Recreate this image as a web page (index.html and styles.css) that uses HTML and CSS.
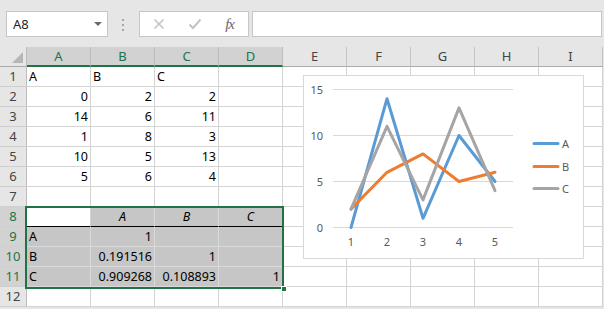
FILE: index.html
```html
<!DOCTYPE html>
<html lang="en">
<head>
    <meta charset="UTF-8">
    <title>Correlation</title>
    <link rel="stylesheet" href="styles.css">
</head>
<body>
    <div class="toolbar">
        <div class="namebox">
            <span>A8</span>
            <span class="caret"></span>
        </div>
        <div class="grip"><i></i><i></i><i></i></div>
        <div class="fxbtns">
            <svg width="12" height="12" viewBox="0 0 12 12"><path d="M1.5 1.5 L10.5 10.5 M10.5 1.5 L1.5 10.5" stroke="#c3c3c3" stroke-width="1.5" fill="none"/></svg>
            <svg width="14" height="12" viewBox="0 0 14 12"><path d="M1.5 6.5 L5 10 L12.5 1.5" stroke="#c3c3c3" stroke-width="2" fill="none"/></svg>
            <span class="fx">fx</span>
        </div>
        <div class="formula"></div>
    </div>

    <div class="sheet">
        <div class="grid">
            <div class="corner"></div>
            <div class="ch sel">A</div><div class="ch sel">B</div><div class="ch sel">C</div><div class="ch sel">D</div>
            <div class="ch">E</div><div class="ch">F</div><div class="ch">G</div><div class="ch">H</div><div class="ch">I</div>

            <div class="rh">1</div>
            <div class="c">A</div><div class="c">B</div><div class="c">C</div><div class="c"></div>
            <div class="c"></div><div class="c"></div><div class="c"></div><div class="c"></div><div class="c"></div>

            <div class="rh">2</div>
            <div class="c n">0</div><div class="c n">2</div><div class="c n">2</div><div class="c"></div>
            <div class="c"></div><div class="c"></div><div class="c"></div><div class="c"></div><div class="c"></div>

            <div class="rh">3</div>
            <div class="c n">14</div><div class="c n">6</div><div class="c n">11</div><div class="c"></div>
            <div class="c"></div><div class="c"></div><div class="c"></div><div class="c"></div><div class="c"></div>

            <div class="rh">4</div>
            <div class="c n">1</div><div class="c n">8</div><div class="c n">3</div><div class="c"></div>
            <div class="c"></div><div class="c"></div><div class="c"></div><div class="c"></div><div class="c"></div>

            <div class="rh">5</div>
            <div class="c n">10</div><div class="c n">5</div><div class="c n">13</div><div class="c"></div>
            <div class="c"></div><div class="c"></div><div class="c"></div><div class="c"></div><div class="c"></div>

            <div class="rh">6</div>
            <div class="c n">5</div><div class="c n">6</div><div class="c n">4</div><div class="c"></div>
            <div class="c"></div><div class="c"></div><div class="c"></div><div class="c"></div><div class="c"></div>

            <div class="rh">7</div>
            <div class="c"></div><div class="c"></div><div class="c"></div><div class="c"></div>
            <div class="c"></div><div class="c"></div><div class="c"></div><div class="c"></div><div class="c"></div>

            <!-- output table of the correlation tool -->
            <div class="rh on">8</div>
            <div class="c head"></div><div class="c g head i">A</div><div class="c g head i">B</div><div class="c g head i">C</div>
            <div class="c"></div><div class="c"></div><div class="c"></div><div class="c"></div><div class="c"></div>

            <div class="rh on">9</div>
            <div class="c g">A</div><div class="c g n">1</div><div class="c g"></div><div class="c g"></div>
            <div class="c"></div><div class="c"></div><div class="c"></div><div class="c"></div><div class="c"></div>

            <div class="rh on">10</div>
            <div class="c g">B</div><div class="c g n">0.191516</div><div class="c g n">1</div><div class="c g"></div>
            <div class="c"></div><div class="c"></div><div class="c"></div><div class="c"></div><div class="c"></div>

            <div class="rh on">11</div>
            <div class="c g">C</div><div class="c g n">0.909268</div><div class="c g n">0.108893</div><div class="c g n">1</div>
            <div class="c"></div><div class="c"></div><div class="c"></div><div class="c"></div><div class="c"></div>

            <div class="rh">12</div>
            <div class="c"></div><div class="c"></div><div class="c"></div><div class="c"></div>
            <div class="c"></div><div class="c"></div><div class="c"></div><div class="c"></div><div class="c"></div>
        </div>

        <div class="selection"><span class="handle"></span></div>

        <div class="chart">
            <svg width="279" height="182" viewBox="0 0 279 182">
                <g stroke="#d9d9d9" stroke-width="1">
                    <line x1="29" y1="13.5" x2="209" y2="13.5"/>
                    <line x1="29" y1="59.5" x2="209" y2="59.5"/>
                    <line x1="29" y1="105.5" x2="209" y2="105.5"/>
                    <line x1="29" y1="151.5" x2="209" y2="151.5"/>
                </g>
                <g class="lbl" text-anchor="end">
                    <text x="19" y="17.5">15</text>
                    <text x="19" y="63.5">10</text>
                    <text x="19" y="109.5">5</text>
                    <text x="19" y="155.5">0</text>
                </g>
                <g class="lbl" text-anchor="middle">
                    <text x="47" y="169.5">1</text>
                    <text x="83" y="169.5">2</text>
                    <text x="119" y="169.5">3</text>
                    <text x="155" y="169.5">4</text>
                    <text x="191" y="169.5">5</text>
                </g>
                <g fill="none" stroke-width="3" stroke-linejoin="round" stroke-linecap="round">
                    <polyline stroke="#5b9bd5" points="47,151.5 83,22.7 119,142.3 155,59.5 191,105.5"/>
                    <polyline stroke="#ed7d31" points="47,133.1 83,96.3 119,77.9 155,105.5 191,96.3"/>
                    <polyline stroke="#a5a5a5" points="47,133.1 83,50.3 119,123.9 155,31.9 191,114.7"/>
                    <line stroke="#5b9bd5" x1="230" y1="67.5" x2="254" y2="67.5"/>
                    <line stroke="#ed7d31" x1="230" y1="90.5" x2="254" y2="90.5"/>
                    <line stroke="#a5a5a5" x1="230" y1="112.5" x2="254" y2="112.5"/>
                </g>
                <g class="lbl">
                    <text x="258" y="71.5">A</text>
                    <text x="258" y="94.5">B</text>
                    <text x="258" y="116.5">C</text>
                </g>
            </svg>
        </div>
    </div>
</body>
</html>
```

FILE: styles.css
```css
* {
    margin: 0;
    padding: 0;
    box-sizing: border-box;
}
html, body {
    width: 604px;
    height: 309px;
    overflow: hidden;
    background: #e6e6e6;
    font-family: "Noto Sans", "Open Sans", sans-serif;
    font-size: 13px;
    color: #000;
}
.toolbar {
    height: 47px;
    display: flex;
    align-items: flex-start;
    padding: 11px 2px 0 6px;
}
.namebox {
    width: 102px;
    height: 26px;
    background: #fff;
    border: 1px solid #c6c6c6;
    display: flex;
    align-items: center;
    justify-content: space-between;
    padding: 0 5px 0 6px;
    color: #222;
}
.caret {
    width: 0;
    height: 0;
    border-left: 4px solid transparent;
    border-right: 4px solid transparent;
    border-top: 4px solid #6a6a6a;
    margin-top: -1px;
}
.grip {
    display: flex;
    flex-direction: column;
    gap: 3px;
    margin: 8px 15px 0 14px;
}
.grip i {
    width: 2px;
    height: 2px;
    background: #a6a6a6;
}
.fxbtns {
    width: 110px;
    height: 26px;
    background: #fff;
    border: 1px solid #c6c6c6;
    display: flex;
    align-items: center;
    justify-content: space-between;
    padding: 0 14px 0 13px;
    margin-right: 3px;
}
.fx {
    font-family: "Liberation Serif", serif;
    font-style: italic;
    font-size: 15px;
    color: #666;
    letter-spacing: -1px;
}
.formula {
    flex: 1;
    height: 26px;
    background: #fff;
    border: 1px solid #c6c6c6;
}
.sheet {
    position: relative;
}
.grid {
    display: grid;
    grid-template-columns: 27px repeat(9, 64px);
    grid-auto-rows: 20px;
    background: #fff;
    width: 603px;
    border-right: 1px solid #bdbdbd;
}
.grid > div {
    line-height: 19px;
    white-space: nowrap;
    overflow: hidden;
}
.corner {
    background: #e6e6e6;
    border-right: 1px solid #bdbdbd;
    border-bottom: 1px solid #ababab;
    position: relative;
}
.corner::after {
    content: "";
    position: absolute;
    right: 3px;
    bottom: 3px;
    border-left: 11px solid transparent;
    border-bottom: 11px solid #b7b7b7;
}
.ch {
    background: #e6e6e6;
    border-right: 1px solid #c4c4c4;
    border-bottom: 1px solid #ababab;
    text-align: center;
    color: #444;
}
.ch.sel {
    background: #d2d2d2;
    color: #217346;
    border-bottom: 2px solid #217346;
    border-right-color: #bdbdbd;
}
.rh {
    background: #e6e6e6;
    border-right: 1px solid #bdbdbd;
    border-bottom: 1px solid #cfcfcf;
    text-align: center;
    color: #444;
}
.rh.on {
    background: #d2d2d2;
    color: #217346;
}
.c {
    border-right: 1px solid #d4d4d4;
    border-bottom: 1px solid #d4d4d4;
    padding: 0 2px;
    font-size: 12.5px;
}
.c.n {
    text-align: right;
}
.c.g {
    background: #c6c6c6;
    border-color: #dadada;
}
.c.head {
    border-bottom-color: #000;
}
.c.i {
    font-style: italic;
    text-align: center;
}
.selection {
    position: absolute;
    left: 25px;
    top: 159px;
    width: 259px;
    height: 83px;
    border: 2px solid #217346;
}
.handle {
    position: absolute;
    right: -5px;
    bottom: -5px;
    width: 6px;
    height: 6px;
    background: #217346;
    border: 1px solid #fff;
}
.chart {
    position: absolute;
    left: 303px;
    top: 28px;
    width: 281px;
    height: 184px;
    background: #fff;
    border: 1px solid #d9d9d9;
}
.chart svg {
    display: block;
}
.lbl {
    font-family: "Noto Sans", "Open Sans", sans-serif;
    font-size: 11px;
    fill: #595959;
}
```
